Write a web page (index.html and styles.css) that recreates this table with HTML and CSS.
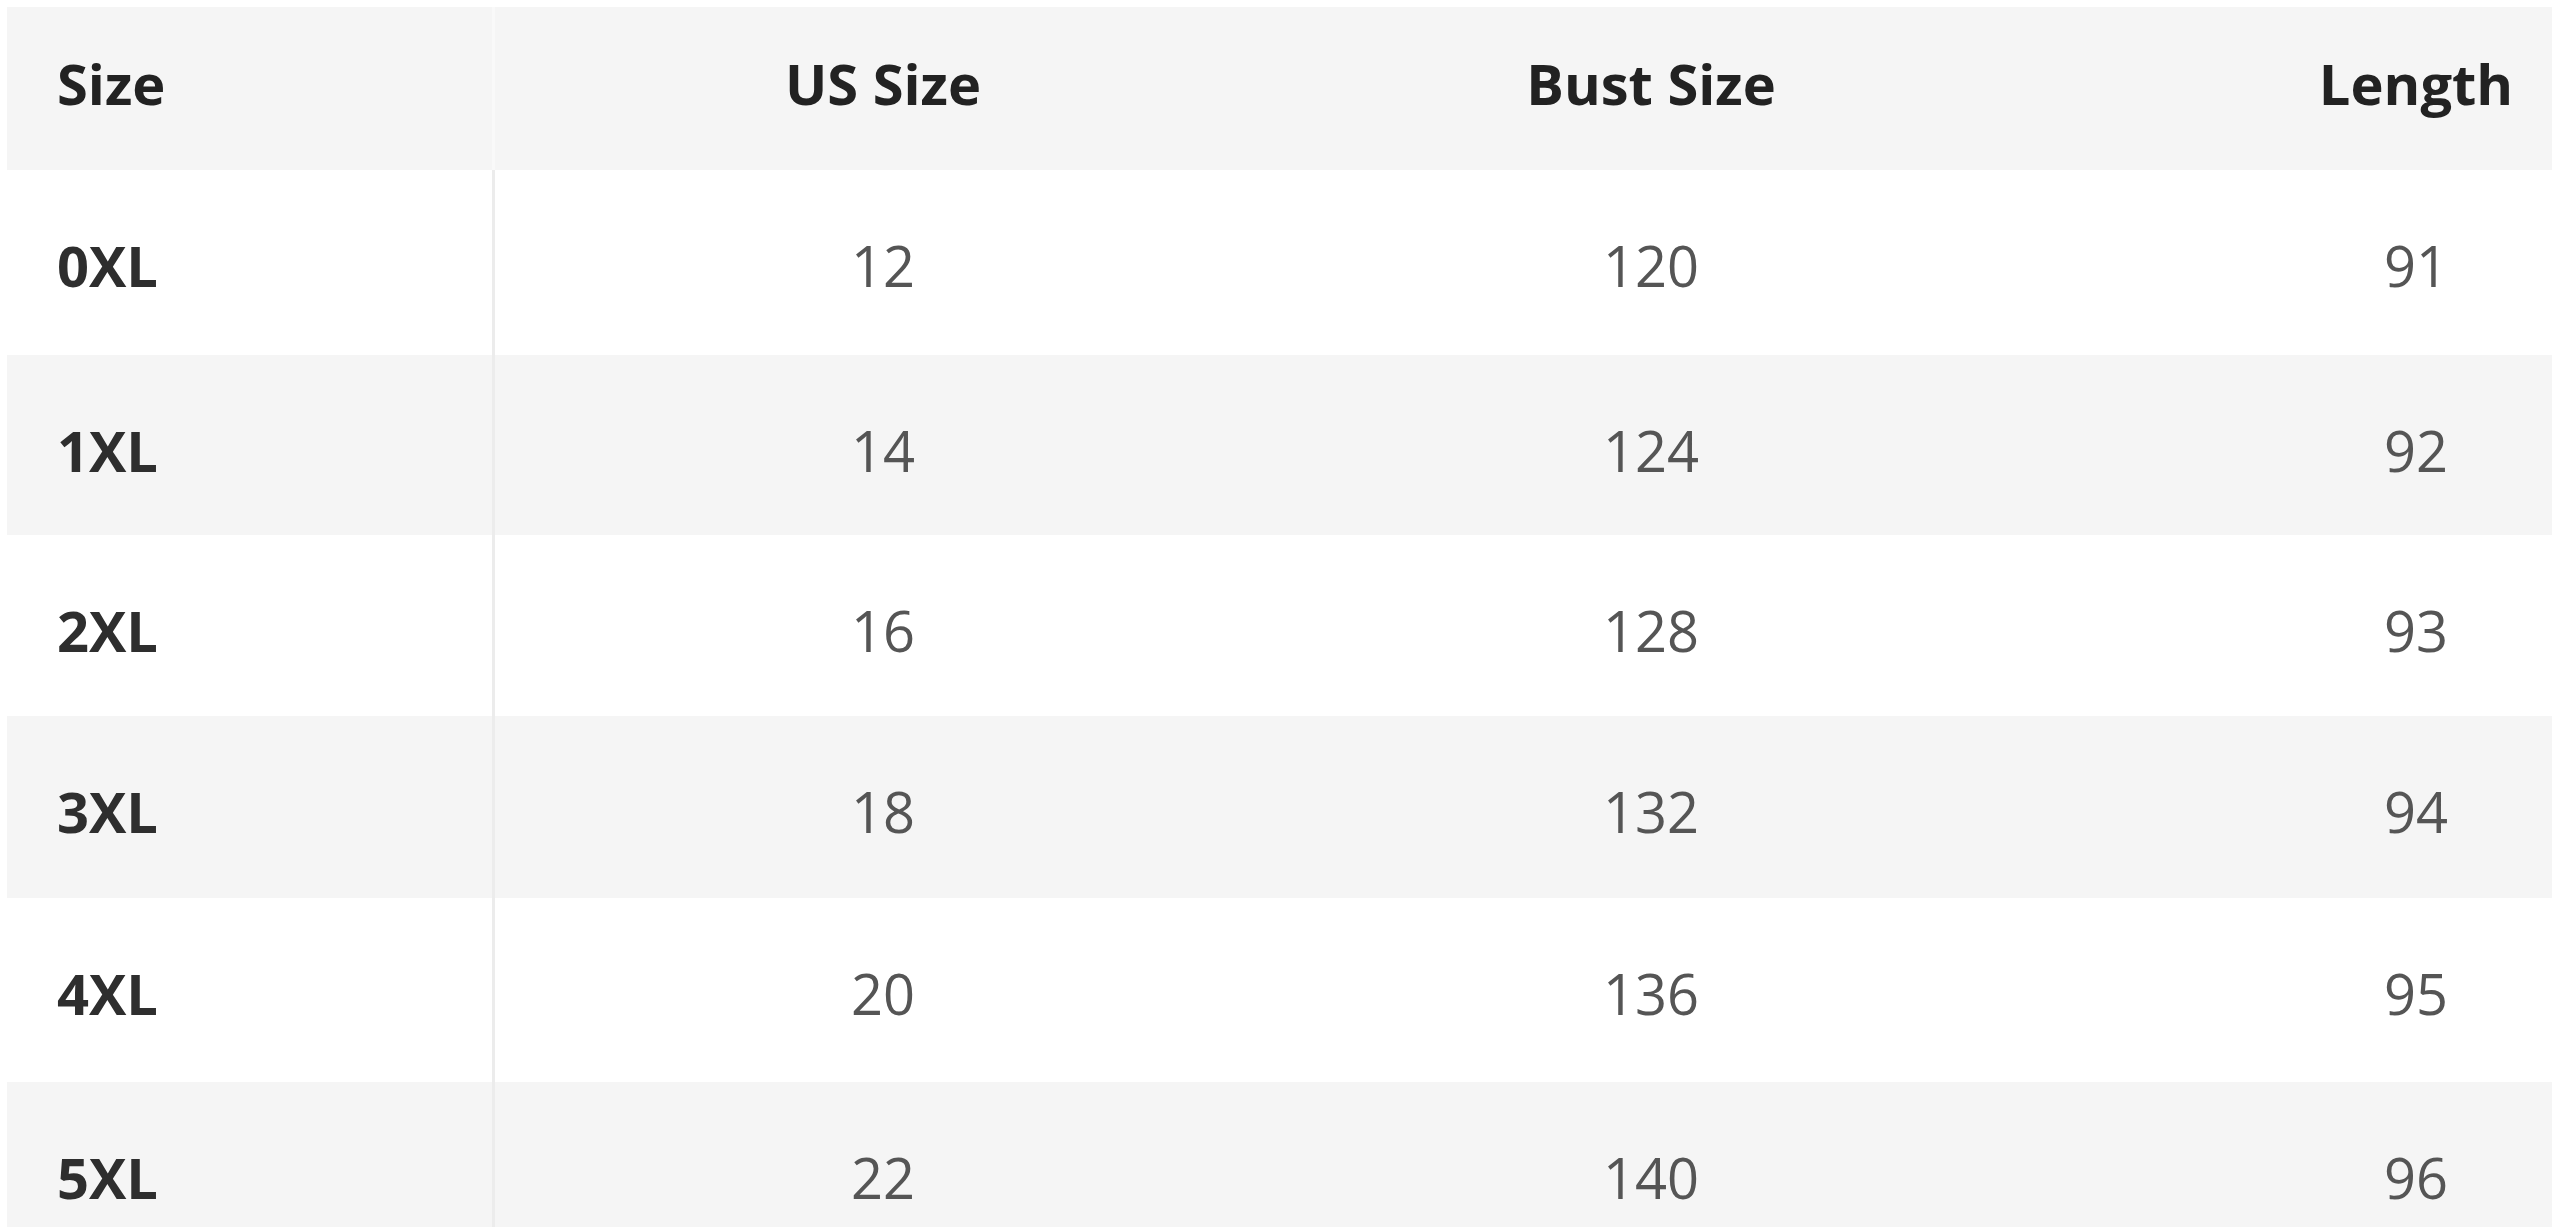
FILE: index.html
```html
<!DOCTYPE html>
<html lang="en">
<head>
<meta charset="utf-8">
<title>Size Chart</title>
<link rel="stylesheet" href="styles.css">
</head>
<body>
<div class="chart">
  <div class="row head">
    <div class="cell first">Size</div>
    <div class="cell">US Size</div>
    <div class="cell">Bust Size</div>
    <div class="cell last">Length</div>
  </div>
  <div class="row body r1">
    <div class="cell first">0XL</div>
    <div class="cell">12</div>
    <div class="cell">120</div>
    <div class="cell last">91</div>
  </div>
  <div class="row body alt r2">
    <div class="cell first">1XL</div>
    <div class="cell">14</div>
    <div class="cell">124</div>
    <div class="cell last">92</div>
  </div>
  <div class="row body r3">
    <div class="cell first">2XL</div>
    <div class="cell">16</div>
    <div class="cell">128</div>
    <div class="cell last">93</div>
  </div>
  <div class="row body alt r4">
    <div class="cell first">3XL</div>
    <div class="cell">18</div>
    <div class="cell">132</div>
    <div class="cell last">94</div>
  </div>
  <div class="row body r5">
    <div class="cell first">4XL</div>
    <div class="cell">20</div>
    <div class="cell">136</div>
    <div class="cell last">95</div>
  </div>
  <div class="row body alt r6">
    <div class="cell first">5XL</div>
    <div class="cell">22</div>
    <div class="cell">140</div>
    <div class="cell last">96</div>
  </div>
</div>
</body>
</html>
```

FILE: styles.css
```css
html, body {
  margin: 0;
  padding: 0;
  background: #ffffff;
}

body {
  padding: 7px 8px 0 7px;
  font-family: "Open Sans", "Liberation Sans", sans-serif;
}

.chart {
  display: flex;
  flex-direction: column;
}

.row {
  display: grid;
  grid-template-columns: 488px 776px 760px 1fr;
  background: #ffffff;
}

.row.head,
.row.alt {
  background: #f5f5f5;
}

.cell {
  font-size: 56px;
  line-height: 56px;
  text-align: center;
  color: #555555;
  white-space: nowrap;
}

.cell.first {
  text-align: left;
  padding-left: 50px;
  font-weight: 700;
  color: #2e2e2e;
  border-right: 3px solid #ececec;
}

.cell.last {
  padding-left: 249px;
}

.head {
  height: 163px;
}

.head .cell {
  padding-top: 48px;
  font-weight: 700;
  color: #222222;
}

.head .cell.first {
  border-right-color: #f9f9f9;
}

.body .cell {
  padding-top: 67px;
}

.r1 { height: 185px; }
.r2 { height: 180px; }
.r3 { height: 181px; }
.r4 { height: 182px; }
.r5 { height: 184px; }
.r6 { height: 145px; }
```
